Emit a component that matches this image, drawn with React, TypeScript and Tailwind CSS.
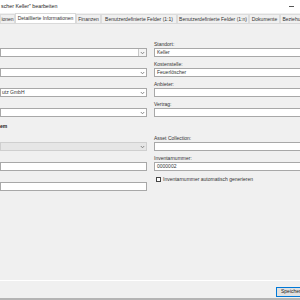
import React from "react";

const tabs = [
  { label: "ionen", w: "w-[15px]" },
  { label: "Detaillierte Informationen", w: "w-[61px]", active: true },
  { label: "Finanzen", w: "w-[25px]" },
  { label: "Benutzerdefinierte Felder (1:1)", w: "w-[76px]" },
  { label: "Benutzerdefinierte Felder (1:n)", w: "w-[72px]" },
  { label: "Dokumente", w: "w-[31px]" },
  { label: "Beziehungen", w: "w-[34px]" },
];

function Chevron() {
  return (
    <svg width="5" height="4" viewBox="0 0 5 4" className="shrink-0">
      <polyline points="0.8,1 2.5,2.8 4.2,1" fill="none" stroke="#707070" strokeWidth="0.8" />
    </svg>
  );
}

function Combo({ value, boxed, disabled }: { value?: string; boxed?: boolean; disabled?: boolean }) {
  return (
    <div
      className={`flex h-[9px] items-center border ${
        disabled ? "border-[#cfcfcf] bg-[#e6e6e6]" : "border-[#a8a8a8] bg-white"
      }`}
    >
      <span className="flex-1 truncate pl-[1px] text-[5px] leading-none text-[#333]">{value}</span>
      {boxed ? (
        <div className="flex h-full w-[8px] items-center justify-center border-l border-[#c8c8c8] bg-[#f4f4f4]">
          <Chevron />
        </div>
      ) : (
        <div className="flex w-[8px] items-center justify-center">
          <Chevron />
        </div>
      )}
    </div>
  );
}

function Input({ value }: { value?: string }) {
  return (
    <div className="flex h-[9px] items-center border border-[#a8a8a8] bg-white pl-[2px] text-[5px] leading-none text-[#333]">
      {value}
    </div>
  );
}

function Label({ text }: { text?: string }) {
  return (
    <div className="flex h-[7px] items-center text-[5px] leading-none text-[#333]">{text}</div>
  );
}

export default function App() {
  return (
    <div
      className="flex h-[300px] w-[300px] flex-col overflow-hidden bg-[#f0f0f0]"
      style={{ fontFamily: '"Liberation Sans", Arial, sans-serif' }}
    >
      {/* Title bar */}
      <div className="flex h-[13px] shrink-0 items-center justify-between bg-white pl-[1px] pr-[6px]">
        <span className="text-[5.3px] leading-none text-[#222]">scher Keller" bearbeiten</span>
        <div className="h-[1px] w-[5px] bg-[#555]" />
      </div>

      {/* Tabs */}
      <div className="flex h-[11px] shrink-0 items-end border-b border-[#d9d9d9] bg-[#f0f0f0]">
        {tabs.map((t) => (
          <div
            key={t.label}
            className={`${t.w} flex shrink-0 items-center justify-center border border-b-0 text-[5px] leading-none text-[#333] ${
              t.active ? "h-[10px] border-[#d9d9d9] bg-white" : "h-[9px] border-[#dcdcdc] bg-[#f0f0f0]"
            }`}
          >
            <span className="whitespace-nowrap">{t.label}</span>
          </div>
        ))}
      </div>

      {/* Panel */}
      <div className="flex flex-1 gap-[7px] border-b border-white pt-[17px]">
        {/* Left column */}
        <div className="flex w-[147px] shrink-0 flex-col">
          <Label />
          <Combo boxed />
          <div className="h-[4px]" />
          <Label />
          <Combo />
          <div className="h-[4px]" />
          <Label />
          <Combo value="utz GmbH" />
          <div className="h-[4px]" />
          <Label />
          <Combo />
          <div className="flex h-[18px] items-center">
            <span className="text-[5px] font-bold leading-none text-[#222]">em</span>
          </div>
          <Label />
          <Combo disabled />
          <div className="h-[4px]" />
          <Label />
          <Input />
          <div className="h-[4px]" />
          <Label />
          <Input />
        </div>

        {/* Right column */}
        <div className="flex w-[160px] shrink-0 flex-col">
          <Label text="Standort:" />
          <Input value="Keller" />
          <div className="h-[4px]" />
          <Label text="Kostenstelle:" />
          <Input value="Feuerlöscher" />
          <div className="h-[4px]" />
          <Label text="Anbieter:" />
          <Input />
          <div className="h-[4px]" />
          <Label text="Vertrag:" />
          <Input />
          <div className="h-[18px]" />
          <Label text="Asset Collection:" />
          <Input />
          <div className="h-[4px]" />
          <Label text="Inventarnummer:" />
          <Input value="0000002" />
          <div className="mt-[6px] flex items-center gap-[2px] pl-[2px]">
            <div className="h-[5px] w-[5px] border border-[#444] bg-white" />
            <span className="text-[5px] leading-none text-[#333]">Inventarnummer automatisch generieren</span>
          </div>
        </div>
      </div>

      {/* Footer */}
      <div className="flex h-[17px] shrink-0 items-center justify-end pt-[4px]">
        <div className="flex h-[10px] w-[30px] shrink-0 translate-x-[6px] items-center border border-[#0078d7] bg-[#e1e1e1] pl-[4px]">
          <span className="text-[5px] leading-none text-[#222]">Speichern</span>
        </div>
      </div>
      <div className="h-[2px] shrink-0 bg-[#b4b4b4]" />
    </div>
  );
}
